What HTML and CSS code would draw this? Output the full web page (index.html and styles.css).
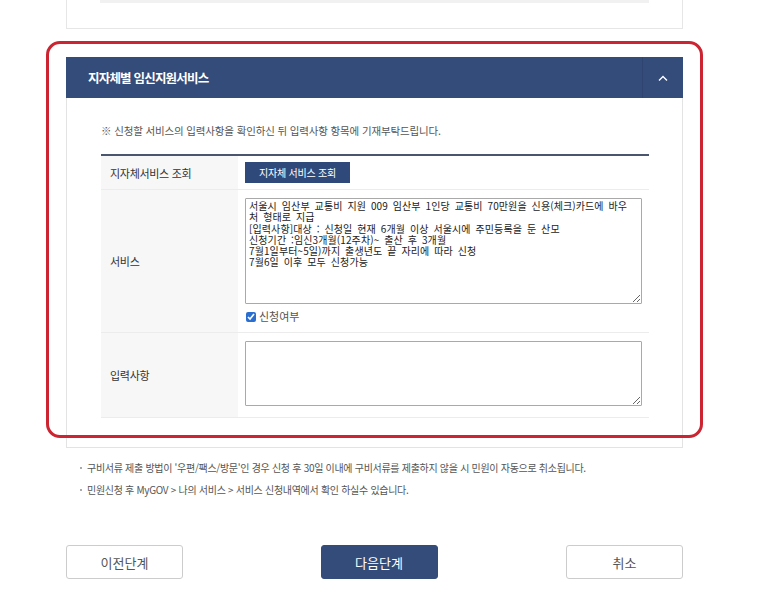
FILE: index.html
```html
<!DOCTYPE html>
<html lang="ko">
<head>
  <meta charset="UTF-8">
  <meta name="viewport" content="width=device-width, initial-scale=1.0">
  <title>민원신청 - 지자체별 임신지원서비스</title>
  <link rel="stylesheet" href="styles.css">
</head>
<body>
  <div class="page">
    <div class="prev-card">
      <div class="prev-line"></div>
    </div>

    <div class="section">
      <div class="section-head">
        <h2>지자체별 임신지원서비스</h2>
        <button class="toggle" aria-label="접기">
          <svg width="10" height="6" viewBox="0 0 10 6"><path d="M1 5.5 L5 1.5 L9 5.5" fill="none" stroke="#fff" stroke-width="1.4"/></svg>
        </button>
      </div>

      <div class="section-body">
        <p class="notice">※ 신청할 서비스의 입력사항을 확인하신 뒤 입력사항 항목에 기재부탁드립니다.</p>

        <table class="form-table">
          <tr class="row-search">
            <th>지자체서비스 조회</th>
            <td><button class="btn-search">지자체 서비스 조회</button></td>
          </tr>
          <tr>
            <th>서비스</th>
            <td>
              <textarea class="service-text" readonly>서울시 임산부 교통비 지원 009 임산부 1인당 교통비 70만원을 신용(체크)카드에 바우
처 형태로 지급
[입력사항]대상 : 신청일 현재 6개월 이상 서울시에 주민등록을 둔 산모
신청기간 :임신3개월(12주차)~ 출산 후 3개월
7월1일부터~5일)까지 출생년도 끝 자리에 따라 신청
7월6일 이후 모두 신청가능</textarea>
              <label class="check"><input type="checkbox" checked> 신청여부</label>
            </td>
          </tr>
          <tr class="row-input">
            <th>입력사항</th>
            <td><textarea class="input-text"></textarea></td>
          </tr>
        </table>
      </div>
    </div>

    <ul class="notes">
      <li>구비서류 제출 방법이 '우편/팩스/방문'인 경우 신청 후 30일 이내에 구비서류를 제출하지 않을 시 민원이 자동으로 취소됩니다.</li>
      <li>민원신청 후 MyGOV &gt; 나의 서비스 &gt; 서비스 신청내역에서 확인 하실수 있습니다.</li>
    </ul>

    <div class="actions">
      <button class="btn">이전단계</button>
      <button class="btn primary">다음단계</button>
      <button class="btn">취소</button>
    </div>
  </div>

  <div class="highlight"></div>
</body>
</html>
```

FILE: styles.css
```css
body, html {
  margin: 0;
  padding: 0;
  background: #fff;
  font-family: "Noto Sans CJK KR", "Noto Sans", sans-serif;
  color: #333;
}

body {
  position: relative;
}

.page {
  width: 617px;
  margin-left: 66px;
}

.prev-card {
  height: 29px;
  border: 1px solid #e6e6e6;
  border-top: none;
  box-sizing: border-box;
  padding: 0 33px;
}

.prev-line {
  height: 3px;
  background: #f1f1f1;
}

.section {
  margin-top: 28px;
  border: 1px solid #e3e3e3;
  border-top: none;
}

.section-head {
  display: flex;
  align-items: center;
  height: 41px;
  background: #344c79;
  margin: 0 -1px;
}

.section-head h2 {
  flex: 1;
  margin: 0;
  padding-left: 22px;
  font-size: 12.5px;
  font-weight: bold;
  color: #fff;
  letter-spacing: -0.8px;
}

.toggle {
  width: 41px;
  height: 41px;
  border: none;
  border-left: 1px solid #2f4570;
  background: transparent;
  display: flex;
  align-items: center;
  justify-content: center;
  padding: 0;
}

.section-body {
  padding: 25px 33px 29px 34px;
}

.notice {
  margin: 0 0 15px;
  font-size: 10.5px;
  line-height: 16px;
  color: #555;
  letter-spacing: -0.15px;
}

.form-table {
  width: 100%;
  border-collapse: collapse;
  border-top: 2px solid #4a566d;
}

.form-table tr {
  border-bottom: 1px solid #ececec;
}

.form-table th {
  width: 128px;
  background: #f7f7f7;
  text-align: left;
  font-weight: normal;
  font-size: 11px;
  color: #333;
  padding: 0 0 0 9px;
  letter-spacing: -0.3px;
}

.form-table td {
  padding: 8px 7px 8px 7px;
}

.row-search td {
  padding: 6px 7px 6px 7px;
  height: 21px;
}

.row-input td {
  padding-bottom: 11px;
}

.btn-search {
  display: block;
  width: 105px;
  height: 21px;
  border: none;
  background: #2f4a7a;
  color: #fff;
  font-family: inherit;
  font-size: 10px;
  padding: 0;
  letter-spacing: -0.2px;
}

textarea {
  display: block;
  box-sizing: border-box;
  width: 397px;
  border: 1px solid #a9a9a9;
  border-radius: 1px;
  padding: 1px 3px;
  margin: 0;
  font-family: "Noto Sans CJK KR", sans-serif;
  color: #222;
}

.service-text {
  height: 106px;
  font-size: 10px;
  line-height: 11.3px;
  letter-spacing: 0.1px;
  word-spacing: 2px;
  overflow: hidden;
}

.input-text {
  height: 65px;
}

.check {
  display: flex;
  align-items: center;
  margin-top: 5px;
  font-size: 11px;
  line-height: 15px;
  color: #555;
  gap: 3px;
}

.check input {
  width: 10px;
  height: 10px;
  margin: 0 0 0 1px;
  accent-color: #2a6fd0;
}

.notes {
  list-style: none;
  margin: 9px 0 0;
  padding: 0 0 0 14px;
}

.notes li {
  position: relative;
  padding-left: 7px;
  font-size: 10px;
  line-height: 22px;
  color: #555;
  letter-spacing: -0.3px;
}

.notes li::before {
  content: "";
  position: absolute;
  left: 0;
  top: 10px;
  width: 2px;
  height: 2px;
  background: #aaa;
}

.actions {
  display: flex;
  justify-content: space-between;
  margin-top: 44px;
}

.btn {
  width: 117px;
  height: 34px;
  border: 1px solid #cccccc;
  border-radius: 3px;
  background: #fff;
  color: #555;
  font-family: inherit;
  font-size: 13px;
  padding: 0;
}

.btn.primary {
  background: #344c79;
  border-color: #344c79;
  color: #fff;
  margin-left: 9px;
}

.highlight {
  position: absolute;
  left: 46px;
  top: 41px;
  width: 657px;
  height: 397px;
  box-sizing: border-box;
  border: 3px solid #cc2430;
  border-radius: 14px;
  pointer-events: none;
}
```
